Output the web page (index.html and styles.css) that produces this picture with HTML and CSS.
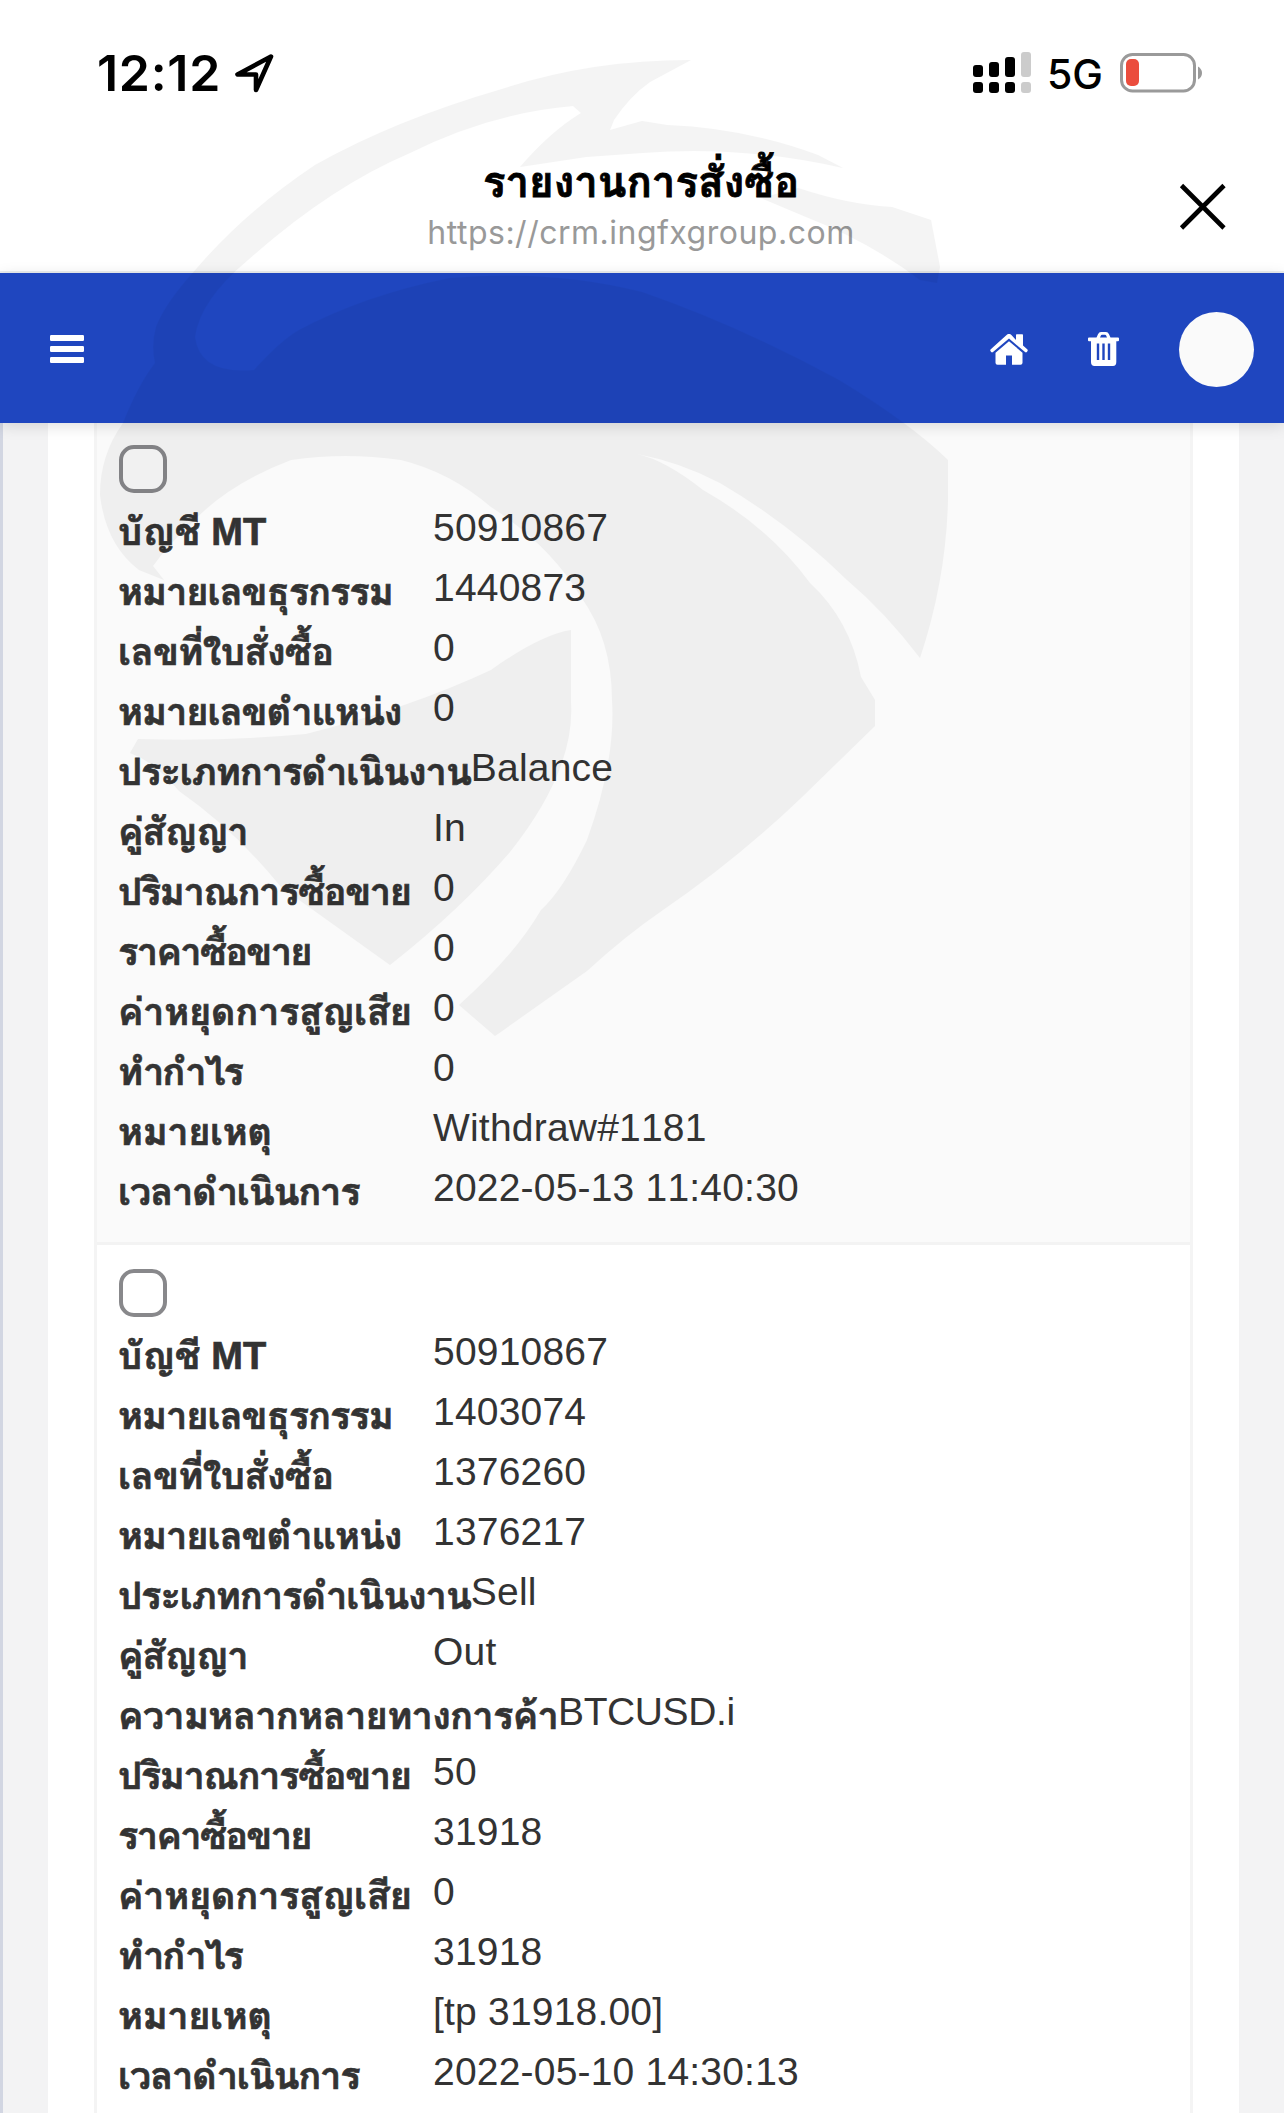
FILE: index.html
```html
<!DOCTYPE html>
<html lang="th">
<head>
<meta charset="utf-8">
<title>รายงานการสั่งซื้อ</title>
<link rel="stylesheet" href="styles.css">
</head>
<body>
<div class="screen">
  <header class="status-bar">
    <div class="status-left">
      <span class="clock">12:12</span>
      <svg class="location" width="42" height="42" viewBox="0 0 42 42"><path d="M38 4.500 4.500 22.500H23V38z" fill="none" stroke="#000" stroke-width="4.600" stroke-linejoin="round"/></svg>
    </div>
    <div class="status-right">
      <svg width="58" height="42" viewBox="0 0 58 42">
        <g fill="#000"><rect y="13" width="10" height="12" rx="3"/><rect x="16" y="10" width="10" height="15" rx="3"/><rect x="32" y="5" width="10" height="20" rx="3"/><rect y="30" width="10" height="11" rx="3"/><rect x="16" y="30" width="10" height="11" rx="3"/><rect x="32" y="30" width="10" height="11" rx="3"/></g>
        <g fill="#ccc"><rect x="48" width="10" height="25" rx="3"/><rect x="48" y="30" width="10" height="11" rx="3"/></g>
      </svg>
      <span class="network">5G</span>
      <svg class="battery" width="83" height="40" viewBox="0 0 83 40">
        <rect x="1.500" y="1.500" width="73" height="36.500" rx="11" fill="none" stroke="#9a9a9a" stroke-width="3"/>
        <rect x="6" y="6" width="13" height="27" rx="5" fill="#eb4d3d"/>
        <path d="M78 13.500q4 2.500 4 6.500t-4 6.500z" fill="#9a9a9a"/>
      </svg>
    </div>
  </header>

  <div class="title-bar">
    <div class="title-text">
      <h1 class="page-title">รายงานการสั่งซื้อ</h1>
      <span class="page-url">https://crm.ingfxgroup.com</span>
    </div>
    <svg class="close" width="48" height="48" viewBox="0 0 48 48"><path d="M2.500 2.500 45 45M45 2.500 2.500 45" stroke="#000" stroke-width="4.600"/></svg>
  </div>

  <nav class="navbar">
    <svg class="menu" width="34" height="28" viewBox="0 0 34 28" fill="#fff"><rect width="34" height="6" rx="1.200"/><rect y="11" width="34" height="6" rx="1.200"/><rect y="22" width="34" height="6" rx="1.200"/></svg>
    <div class="nav-actions">
      <svg class="home" width="38" height="31" viewBox="0 0 38 31" fill="#fff"><path d="M26 6V1q0-.7.700-.7h5.600q.7 0 .7.700v10.500l4.200 3.800q1 .9.200 1.900l-.6.800q-.8.900-1.800 0L19 4.600 3 18q-1 .9-1.800 0l-.6-.8q-.8-1 .2-1.900L16.600.9Q19-1 21.400.9z"/><path d="M19 7.200 32.500 18.700V28.800q0 2-2 2H22V21.500h-6v9.300H7.500q-2 0-2-2V18.700z"/></svg>
      <svg class="trash" width="31" height="34" viewBox="0 0 31 34" fill="#fff" fill-rule="evenodd"><path d="M8.500 5.500 10 2.200Q11 0 13 0h5q2 0 3 2.200l1.500 3.300H30q1 0 1 1v1.800q0 1-1 1h-1.700V30q0 4-3.300 4H6.500Q3 34 3 30V9.300H1q-1 0-1-1V6.500q0-1 1-1zM12 5.500h7L18 3.300q-.2-.5-1-.5h-3q-.8 0-1 .5zM8.800 11.500v16.500h2.400V11.500zM14.300 11.500v16.500h2.400V11.500zM19.800 11.500v16.500h2.400V11.500z"/></svg>
      <span class="avatar"></span>
    </div>
  </nav>

  <main class="content">
    <div class="panel">
      <div class="table">
        <section class="record striped">
          <span class="checkbox"></span>
          <div class="row"><b class="label account">บัญชี MT</b><span>50910867</span></div>
          <div class="row"><b class="label">หมายเลขธุรกรรม</b><span>1440873</span></div>
          <div class="row"><b class="label order">เลขที่ใบสั่งซื้อ</b><span>0</span></div>
          <div class="row"><b class="label">หมายเลขตำแหน่ง</b><span>0</span></div>
          <div class="row"><b class="label">ประเภทการดำเนินงาน</b><span>Balance</span></div>
          <div class="row"><b class="label">คู่สัญญา</b><span>In</span></div>
          <div class="row"><b class="label volume">ปริมาณการซื้อขาย</b><span>0</span></div>
          <div class="row"><b class="label price">ราคาซื้อขาย</b><span>0</span></div>
          <div class="row"><b class="label stop">ค่าหยุดการสูญเสีย</b><span>0</span></div>
          <div class="row"><b class="label profit">ทำกำไร</b><span>0</span></div>
          <div class="row"><b class="label note">หมายเหตุ</b><span>Withdraw#1181</span></div>
          <div class="row"><b class="label time">เวลาดำเนินการ</b><span>2022-05-13 11:40:30</span></div>
        </section>
        <section class="record">
          <span class="checkbox"></span>
          <div class="row"><b class="label account">บัญชี MT</b><span>50910867</span></div>
          <div class="row"><b class="label">หมายเลขธุรกรรม</b><span>1403074</span></div>
          <div class="row"><b class="label order">เลขที่ใบสั่งซื้อ</b><span>1376260</span></div>
          <div class="row"><b class="label">หมายเลขตำแหน่ง</b><span>1376217</span></div>
          <div class="row"><b class="label">ประเภทการดำเนินงาน</b><span>Sell</span></div>
          <div class="row"><b class="label">คู่สัญญา</b><span>Out</span></div>
          <div class="row"><b class="label variety">ความหลากหลายทางการค้า</b><span class="symbol">BTCUSD.i</span></div>
          <div class="row"><b class="label volume">ปริมาณการซื้อขาย</b><span>50</span></div>
          <div class="row"><b class="label price">ราคาซื้อขาย</b><span>31918</span></div>
          <div class="row"><b class="label stop">ค่าหยุดการสูญเสีย</b><span>0</span></div>
          <div class="row"><b class="label profit">ทำกำไร</b><span>31918</span></div>
          <div class="row"><b class="label note">หมายเหตุ</b><span>[tp 31918.00]</span></div>
          <div class="row"><b class="label time">เวลาดำเนินการ</b><span>2022-05-10 14:30:13</span></div>
        </section>
      </div>
    </div>
  </main>

  <!-- eagle watermark over the whole page -->
  <svg class="watermark" width="1284" height="2113" viewBox="0 0 1284 2113">
    <path d="M691 60Q590 60 502 89Q395 120 315 165Q245 212 197 268Q165 303 156 327Q151 345 155 363Q138 385 123 423Q100 455 100 495Q106 545 139 570L164 580L153 566Q168 545 188 527Q225 485 291 460Q345 452 401 460Q450 472 491 507Q550 545 581 597Q612 640 612 700Q616 760 587 840Q563 890 541 910Q515 955 459 1005L495 1036Q560 990 587 971Q625 936 663 910Q735 861 800 799L875 726V700L861 677Q850 620 810 583Q770 528 703 490Q665 460 637 454Q680 462 720 483Q790 524 847 580Q885 612 920 658Q946 580 948 500V460Q910 423 839 380Q740 326 642 292Q550 269 450 278Q365 295 299 330Q280 341 254 370Q200 375 195 337Q200 300 248 260Q330 187 410 153Q490 113 573 106L581 113Q550 132 520 167L586 157L642 153Q742 145 843 168L818 155Q745 128 667 125L642 121L610 130L614 120Q630 96 650 82z"/>
    <path d="M761 198 798 188Q850 205 892 207L931 220 940 267 937 283 920 280Q870 242 806 217z"/>
    <path d="M571 630Q540 635 491 670Q410 708 306 734Q220 742 138 739L130 753Q155 762 179 791Q235 830 281 887L390 965Q460 910 510 852Q575 770 571 703z"/>
  </svg>
</div>
</body>
</html>
```
FILE: styles.css
```css
* { box-sizing: border-box; }

body { margin: 0; background: #fff; }

svg { display: block; flex: none; }

.screen {
  position: relative;
  width: 1284px;
  height: 2113px;
  overflow: hidden;
  display: flex;
  flex-direction: column;
}

.status-bar {
  height: 146px;
  padding: 0 81px 0 97px;
  display: flex;
  justify-content: space-between;
  align-items: center;
  font-family: Inter, sans-serif;
}
.status-left, .status-right { display: flex; align-items: center; }
.clock { font-size: 50px; font-weight: 600; line-height: 60px; letter-spacing: .7px; }
.location { margin-left: 12px; }
.network { margin: 2px 17px 0 16px; font-size: 41px; font-weight: 500; line-height: 42px; }

.title-bar {
  height: 127px;
  padding: 0 57px 0 0;
  display: flex;
  justify-content: flex-end;
  align-items: center;
  border-bottom: 2px solid #eceeef;
}
.title-text {
  flex: 1;
  margin-right: -48px;
  padding: 0 0 9px 55px;
  display: flex;
  flex-direction: column;
  align-items: center;
}
.page-title {
  margin: 0 0 3px;
  font: bold 42px/54px "Liberation Sans", Loma, sans-serif;
  -webkit-text-stroke: .8px #000;
}
.page-url {
  font: 32px/40px Inter, sans-serif;
  letter-spacing: .5px;
  color: #999;
}
.close { margin-top: -3px; }

.navbar {
  position: relative;
  height: 150px;
  flex: none;
  padding: 2px 30px 0 50px;
  display: flex;
  justify-content: space-between;
  align-items: center;
  background: #1f46bf;
  box-shadow: 0 3px 14px rgba(0, 0, 0, .13);
}
.nav-actions { display: flex; align-items: center; }
.trash { margin: 0 60px; }
.avatar { width: 75px; height: 75px; border-radius: 50%; background: #fafafa; }

.content {
  flex: 1;
  padding: 0 45px;
  background: #f3f3f4;
  border-left: 3px solid #d2d6e2;
}
.panel { height: 100%; padding: 0 46px; background: #fff; }
.table {
  height: 100%;
  border: solid #f4f4f4;
  border-width: 0 3px;
}

.record {
  padding: 24px 22px 0;
  display: flex;
  flex-direction: column;
  font: 39px/60px "Liberation Sans", Arial, sans-serif;
  font-kerning: none;
  letter-spacing: .2px;
  color: #333;
}
.striped { height: 822px; padding-top: 22px; background: #fafafa; border-bottom: 3px solid #f3f3f3; }
.checkbox {
  width: 48px;
  height: 48px;
  flex: none;
  margin-bottom: 5px;
  border: 4px solid #88888b;
  border-radius: 15px;
  background: rgba(255, 255, 255, .4);
}
.row { height: 60px; display: flex; align-items: flex-start; white-space: nowrap; }
.label {
  min-width: 315px;
  margin-left: -1px;
  font: bold 38px/68px "Liberation Sans", Loma, sans-serif;
  letter-spacing: -1.05px;
  -webkit-text-stroke: .7px #333;
}
.account { letter-spacing: .1px; }
.order { letter-spacing: -.6px; }
.volume { letter-spacing: -1.35px; }
.price { letter-spacing: -1.65px; }
.stop { letter-spacing: -.3px; }
.profit { letter-spacing: -2.1px; }
.note { letter-spacing: -.4px; }
.time { letter-spacing: -1.2px; }
.variety { letter-spacing: -.7px; }
.symbol { letter-spacing: -.4px; }

.watermark {
  position: absolute;
  top: 0;
  left: 0;
  fill: #000;
  opacity: .041;
  pointer-events: none;
}
```
